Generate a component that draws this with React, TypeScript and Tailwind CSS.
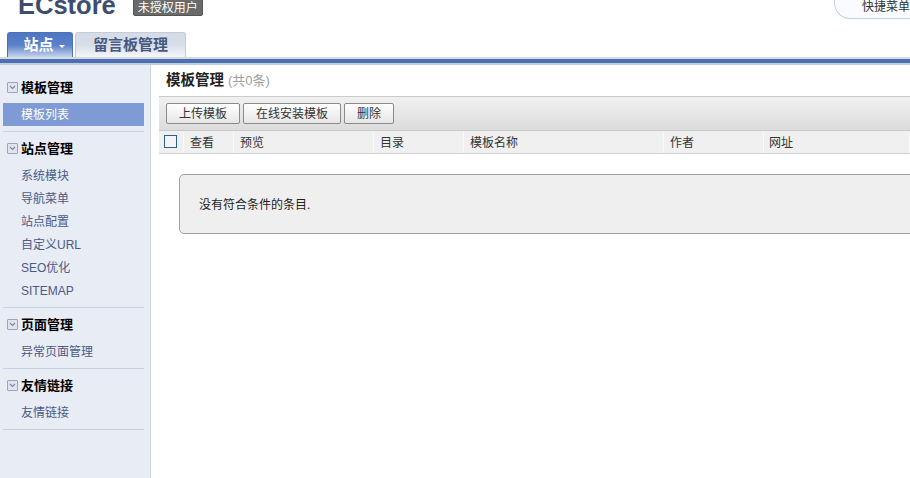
const cjk = "font-['Liberation_Sans','Noto_Sans_CJK_SC',sans-serif]";

const groups = [
  { title: '模板管理', items: ['模板列表'], top: 'pt-[14px]' },
  { title: '站点管理', items: ['系统模块', '导航菜单', '站点配置', '自定义URL', 'SEO优化', 'SITEMAP'], top: 'pt-[8px]' },
  { title: '页面管理', items: ['异常页面管理'], top: 'pt-[8px]' },
  { title: '友情链接', items: ['友情链接'], top: 'pt-[8px]' },
];

const columns = [
  { label: '查看', width: 'w-[50px] pl-[6px]' },
  { label: '预览', width: 'w-[140px] pl-[6px]' },
  { label: '目录', width: 'w-[90px] pl-[6px]' },
  { label: '模板名称', width: 'w-[200px] pl-[6px]' },
  { label: '作者', width: 'w-[100px] pl-[6px]' },
  { label: '网址', width: 'flex-1 pl-[5px]' },
];

const buttons = [
  { label: '上传模板', width: 'w-[74px]' },
  { label: '在线安装模板', width: 'w-[98px]' },
  { label: '删除', width: 'w-[50px]' },
];

function Chevron() {
  return (
    <span className="flex h-[11px] w-[11px] shrink-0 items-center justify-center rounded-[1px] border border-[#9aa6bf] bg-[#dfe4ef]">
      <svg width="7" height="5" viewBox="0 0 7 5">
        <path d="M1 1l2.5 2.5L6 1" fill="none" stroke="#7c88a4" strokeWidth="1.2" />
      </svg>
    </span>
  );
}

function Sidebar() {
  return (
    <aside className="w-[151px] shrink-0 border-r border-[#cfd3da] bg-[#e8ecf5] pl-[3px] pr-[6px]">
      {groups.map((g, i) => (
        <div key={g.title} className={`border-b border-[#c5d1e0] pb-[5px] ${g.top}`}>
          <div className="flex h-[16px] items-center gap-[3px] pl-[4px] text-[13px] font-bold text-black">
            <Chevron />
            <span className="mt-[1px]">{g.title}</span>
          </div>
          <ul className="mt-[8px]">
            {g.items.map((item, j) => (
              <li
                key={item}
                className={`flex h-[23px] items-center pl-[18px] text-[12px] ${
                  i === 0 && j === 0 ? 'bg-[#7f9bd5] text-white' : 'text-[#4b5a86]'
                }`}
              >
                {item}
              </li>
            ))}
          </ul>
        </div>
      ))}
    </aside>
  );
}

export default function App() {
  return (
    <div className={`flex h-[478px] w-[910px] flex-col overflow-hidden bg-white ${cjk}`}>
      <header className="relative h-[57px] shrink-0">
        <div className="flex h-[32px] items-start overflow-hidden pl-[18px]">
          <span className="mt-[-10px] text-[25.5px] font-bold leading-[30px] text-[#3d4d6e]">ECstore</span>
          <span className="mt-[-1px] ml-[17px] flex h-[17px] w-[70px] items-center justify-center rounded-[2px] border border-[#555] bg-[#6a6a6a] text-[12px] text-white">
            未授权用户
          </span>
        </div>
        <div className="flex h-[25px] items-end gap-[2px] pl-[7px]">
          <div className="flex h-[25px] w-[66px] items-center justify-center gap-[5px] rounded-t-[3px] border border-b-0 border-[#4a72b8] bg-gradient-to-b from-[#4f77c2] via-[#5a80c8] to-[#c5d3ea] pl-[8px] text-[15px] font-bold text-white">
            站点
            <span className="mt-[2px] h-0 w-0 border-x-[3px] border-t-[3px] border-x-transparent border-t-white" />
          </div>
          <div className="flex h-[25px] w-[111px] items-center justify-center rounded-t-[3px] border border-b-0 border-[#c4ccd8] bg-gradient-to-b from-[#d6dce7] via-[#d8dee8] to-[#f4f6f9] text-[15px] font-bold text-[#47597f]">
            留言板管理
          </div>
        </div>
        <div className="absolute right-0 top-[-12px] flex h-[31px] w-[76px] items-end justify-end rounded-bl-[16px] border-b border-l border-[#c0d2ee] bg-[#f9fbfe] pb-[3px] text-[12px] leading-[16px] text-[#333]">
          快捷菜单
        </div>
      </header>

      <div className="h-[8px] shrink-0 border-y-2 border-t-[#d5d9e0] border-b-[#c3cadb] bg-[#4a6fb5]" />

      <div className="flex min-h-0 flex-1">
        <Sidebar />
        <main className="min-w-0 flex-1 pl-[8px]">
          <div className="flex h-[31px] items-center pl-[7px]">
            <h1 className="text-[14.5px] font-bold text-[#222]">模板管理</h1>
            <span className="ml-[4px] text-[13px] text-[#a0a0a0]">(共0条)</span>
          </div>
          <div className="flex h-[35px] items-start gap-[3px] border-y border-[#c9c9c9] bg-gradient-to-b from-[#f1f1f1] to-[#dcdcdc] pl-[7px] pt-[6px]">
            {buttons.map((b) => (
              <button
                key={b.label}
                className={`flex h-[21px] items-center justify-center rounded-[2px] border border-[#8a8a8a] bg-gradient-to-b from-white to-[#e6e6e6] text-[12px] text-[#333] ${b.width}`}
              >
                {b.label}
              </button>
            ))}
          </div>
          <div className="flex h-[23px] border-b border-[#d2d2d2] bg-[#f0f0f0] pt-[1px] text-[12px] text-[#333]">
            <div className="flex w-[25px] items-center justify-center border-r border-[#fafafa] pr-[2px]">
              <span className="mt-[-3px] h-[13px] w-[13px] border border-[#2f5f92] bg-[#f4f4f4]" />
            </div>
            {columns.map((c) => (
              <div key={c.label} className={`flex items-center border-r border-[#fafafa] ${c.width}`}>
                {c.label}
              </div>
            ))}
          </div>
          <div className="mt-[20px] ml-[20px] mr-[-10px] flex h-[60px] items-center rounded-[5px] border border-[#a0a0a0] bg-[#efefef] pl-[19px] pt-[1px] text-[12px] text-[#222]">
            没有符合条件的条目.
          </div>
        </main>
      </div>
    </div>
  );
}
